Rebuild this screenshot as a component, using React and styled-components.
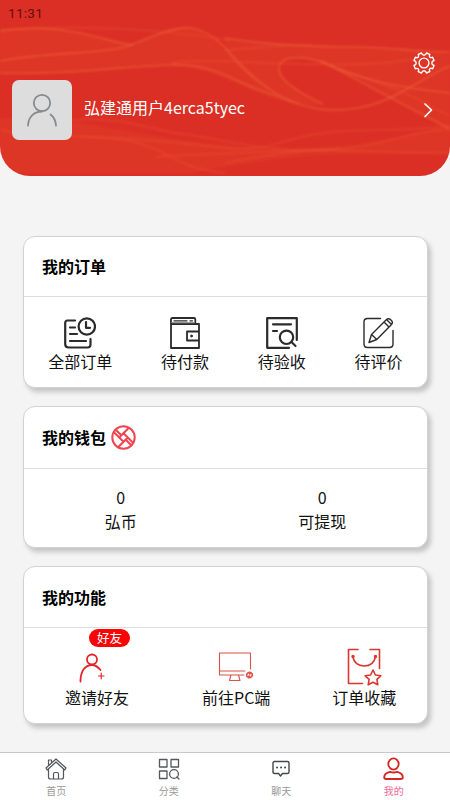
import React from 'react';
import styled, { createGlobalStyle } from 'styled-components';

const GlobalStyle = createGlobalStyle`
    * {
        box-sizing: border-box;
    }
    body {
        margin: 0;
        background: #f4f4f4;
        font-family: "Noto Sans CJK SC", "Noto Sans", sans-serif;
        color: #111;
    }
`;

const Page = styled.div`
    display: flex;
    flex-direction: column;
    height: 800px;
    overflow: hidden;
`;

const Header = styled.header`
    position: relative;
    flex: none;
    height: 176px;
    display: flex;
    flex-direction: column;
    background: #db2f25;
    border-radius: 0 0 30px 30px;
    overflow: hidden;
`;

const WaveSvg = styled.svg`
    position: absolute;
    top: 0;
    left: 0;
    width: 450px;
    height: 176px;
`;

const StatusBar = styled.div`
    position: relative;
    height: 26px;
    padding-left: 8px;
    font-family: Roboto, sans-serif;
    font-size: 13.5px;
    line-height: 26px;
    letter-spacing: 0.3px;
    color: #650e08;
`;

const SettingRow = styled.div`
    position: relative;
    display: flex;
    justify-content: flex-end;
    height: 54px;
    padding: 26px 15px 0 0;
`;

const UserRow = styled.div`
    position: relative;
    display: flex;
    align-items: center;
    height: 60px;
    padding: 0 17px 0 12px;
`;

const Avatar = styled.div`
    display: flex;
    align-items: center;
    justify-content: center;
    width: 60px;
    height: 60px;
    border-radius: 7px;
    background: #ddd;
`;

const UserName = styled.div`
    flex: 1;
    padding: 0 0 7px 12px;
    font-size: 16px;
    line-height: 24px;
    color: #fff;
`;

const Main = styled.main`
    flex: 1;
    display: flex;
    flex-direction: column;
    gap: 18px;
    padding: 60px 22px 0 23px;
`;

const Card = styled.section`
    flex: none;
    height: ${props => props.$height}px;
    border: 1px solid #d2d2d2;
    border-radius: 12px;
    background: #fff;
    box-shadow: 3px 4px 5px rgba(0, 0, 0, 0.2);
`;

const CardTitle = styled.h2`
    display: flex;
    align-items: center;
    gap: 5px;
    height: ${props => props.$height}px;
    margin: 0;
    padding: 0 0 1px 18px;
    border-bottom: 1px solid #dedede;
    font-size: 16px;
    font-weight: 700;
    color: #000;
`;

const OrderList = styled.div`
    display: flex;
    justify-content: space-around;
    padding-top: 20px;
`;

const WalletList = styled(OrderList)`
    padding-top: 16px;
`;

const FunctionList = styled(OrderList)`
    justify-content: flex-start;
    gap: 73px;
    padding: 20px 0 0 41px;

    > :last-child {
        margin-left: -11px;
    }
`;

const Item = styled.div`
    position: relative;
    display: flex;
    flex-direction: column;
    align-items: center;
    font-size: 16px;
    line-height: 24px;
`;

const IconBox = styled.div`
    display: flex;
    align-items: center;
    justify-content: center;
    height: ${props => props.$height || 32}px;
`;

const Badge = styled.span`
    position: absolute;
    top: -19px;
    left: 24px;
    width: 41px;
    height: 18px;
    border-radius: 9px;
    background: #f80505;
    color: #fff;
    font-size: 12.5px;
    line-height: 17px;
    text-align: center;
`;

const TabBar = styled.nav`
    flex: none;
    display: flex;
    height: 48px;
    border-top: 1px solid #c9c9c9;
    background: #fff;
`;

const Tab = styled.div`
    flex: 1;
    display: flex;
    flex-direction: column;
    align-items: center;
    padding: 3px 0 0 0;
    font-size: 10px;
    line-height: 14px;
    color: ${props => (props.$active ? '#f0689a' : '#999')};
`;

const TabIcon = styled.div`
    display: flex;
    align-items: center;
    justify-content: center;
    height: 25px;
    margin-bottom: 3px;
`;

const Svg = styled.svg.attrs({ fill: 'none' })`
    display: block;
    flex: none;
    stroke: ${props => props.$color || '#2b2b2b'};
    stroke-width: ${props => props.$line || 2};
    stroke-linecap: round;
    stroke-linejoin: round;
`;

// the person and the plus sign hang to the left of the label's centre
const InviteSvg = styled(Svg)`
    margin: 2px 10px 0 0;
`;

function Waves() {
    return (
        <WaveSvg viewBox="0 0 450 176" fill="none">
            <defs>
                <filter id="soft" x="-5%" y="-20%" width="110%" height="140%">
                    <feGaussianBlur stdDeviation="1" />
                </filter>
            </defs>
            <g filter="url(#soft)">
                <g fill="#ed5230" fillOpacity="0.18">
                    <path d="M0 31C50 22 75 31 130 45L155 34C190 18 205 34 225 50L280 97C250 95 220 70 180 65C120 68 60 73 0 73Z" />
                    <path d="M225 38C300 50 380 43 450 54V129C400 105 370 80 330 67C300 52 282 54 278 68C279 75 289 88 321 105C280 106 240 72 225 50Z" />
                    <path d="M0 119C70 112 150 142 225 144C320 161 400 134 450 128V154C340 151 280 155 190 173H0Z" />
                </g>
                <g stroke="#f26a3c" strokeOpacity="0.5" strokeWidth="1.7">
                    <path d="M0 31C30 26 60 29 80 33S116 43 133 45" />
                    <path d="M0 61C50 52 100 54 125 47C151 38 170 27 191 28C211 31 225 47 238 62S277 98 300 104" />
                    <path d="M0 73C75 75 125 66 170 65S229 79 262 91S319 115 358 108S424 76 450 66" />
                    <path d="M323 104C292 90 278 77 279 68C281 52 313 56 337 69S400 103 450 129" />
                    <path d="M321 61C357 80 402 88 450 93" />
                    <path d="M225 38C275 46 310 46 355 47S417 52 450 52" />
                </g>
                <g stroke="#f0653b" strokeOpacity="0.32" strokeWidth="1.4">
                    <path d="M0 30C80 25 150 28 230 40" />
                    <path d="M180 65C155 61 194 61 225 61C320 66 375 66 415 59" />
                    <path d="M225 50C250 49 280 44 312 45" />
                    <path d="M340 69L397 89L450 116" />
                    <path d="M0 130C48 139 90 133 130 141S170 167 225 173" />
                    <path d="M72 120C125 116 149 130 183 134S260 152 322 150S400 132 450 129" />
                    <path d="M80 137C145 138 180 143 225 148S283 136 333 132S405 132 450 126" />
                    <path d="M155 157C200 154 225 154 280 151S350 153 450 153" />
                    <path d="M225 163C260 156 300 150 340 148" />
                </g>
            </g>
        </WaveSvg>
    );
}

function GearIcon() {
    return (
        <Svg width="22" height="22" viewBox="0 0 22 22" $color="#fff" $line={1.4}>
            <path d="M8.5 1Q9.2 3.2 11 3.2T13.5 1L16.8 2.3Q15.8 4.3 16.8 5.2T19.7 5.2L21 8.5Q18.8 9.2 18.8 11T21 13.5L19.7 16.8Q17.7 15.8 16.8 16.8T16.8 19.7L13.5 21Q12.8 18.8 11 18.8T8.5 21L5.2 19.7Q6.2 17.7 5.2 16.8T2.3 16.8L1 13.5Q3.2 12.8 3.2 11T1 8.5L2.3 5.2Q4.3 6.2 5.2 5.2T5.2 2.3Z" />
            <circle cx="11" cy="11" r="4.9" />
        </Svg>
    );
}

function AvatarIcon() {
    return (
        <Svg width="32" height="34" viewBox="0 0 32 34" $color="#858b91" $line={1.8}>
            <circle cx="16" cy="10" r="8.2" />
            <path d="M2 32.5C2.5 23 9 18.5 16 18.5M24.5 21.5C28 24 29.7 28 30 32.5" />
        </Svg>
    );
}

function AllOrderIcon() {
    return (
        <Svg width="32" height="32" viewBox="0 0 32 32" $line={2.2}>
            <path d="M11 3.5H3.5Q1.2 3.5 1.2 6V27Q1.2 30.5 4.7 30.5H23.5Q26.5 30.5 26.5 27.5V22M6 10.5H11M6 17H13M6 24H22" />
            <circle cx="22.8" cy="9.5" r="8.2" />
            <path d="M22 5V10.8H26" />
        </Svg>
    );
}

function PayIcon() {
    return (
        <Svg width="32" height="32" viewBox="0 0 32 32" $line={1.8}>
            <path d="M2 2.5Q2 1 3.5 1H25Q26.3 1 26.3 2.5V6.5M2 2.5V31H30V7H3M30 14.5H18V23.5H30" />
            <path d="M5 3.8H18M21 3.8H23.5" strokeWidth="1.3" />
            <path d="M3 5.6H25" stroke="#999" strokeWidth="1.2" />
            <circle cx="22.5" cy="19" r="0.9" fill="#2b2b2b" strokeWidth="1" />
        </Svg>
    );
}

function AcceptIcon() {
    return (
        <Svg width="32" height="32" viewBox="0 0 32 32" $line={2.2}>
            <path d="M23 30.8H1.2V1.2H30.8V23M7 7.3H25M7 14H11" />
            <circle cx="20.5" cy="20.3" r="6.7" />
            <path d="M25.5 25L29.5 29" />
        </Svg>
    );
}

function ReviewIcon() {
    return (
        <Svg width="31" height="32" viewBox="0 0 31 32" $line={1.4}>
            <path d="M17.5 1.5H4.5Q1 1.5 1 5V27Q1 30.5 4.5 30.5H26.5Q30 30.5 30 27V13.5" />
            <path d="M6 25.5L8.5 17.5L23.5 2.5Q25.5 .8 28 3Q30.5 5.5 28.5 7.5L13.8 22.5ZM21 5L26 10M8.5 17.5L13.8 22.5M23.5 2.5L28.5 7.5" />
        </Svg>
    );
}

function CoinIcon() {
    return (
        <Svg width="25" height="25" viewBox="0 0 25 25" $color="#f04450" $line={2}>
            <circle cx="12.5" cy="12.5" r="11.2" />
            <path d="M8.2 12.5L17.2 3.5M12.5 8.2L21.5 17.2M16.8 12.5L7.8 21.5M12.5 16.8L3.5 7.8" />
            <path d="M5 5L9.5 9.5M20 20L15.5 15.5" />
        </Svg>
    );
}

function InviteIcon() {
    return (
        <InviteSvg width="26" height="30" viewBox="0 0 26 30" $color="#e1252b" $line={1.8}>
            <circle cx="13" cy="6.5" r="5" />
            <path d="M1.5 28.5C1.5 18 6 12 13 12C17 12 19 14 21.5 17" />
            <path d="M19.5 23H25M22.2 20.2V25.8" strokeWidth="1.2" />
        </InviteSvg>
    );
}

function PcIcon() {
    return (
        <Svg width="36" height="30" viewBox="0 0 36 30" $color="#dc5148" $line={1.1}>
            <path d="M32.5 17V1H1.5V23H26M1.5 19H27M13 23L11.5 28.5H22L20.5 23" />
            <path d="M28.8 24.2A2.9 2.9 0 0 1 33 20.8M34.2 21.8A2.9 2.9 0 0 1 30 25.2M33 20.8L31.8 22M30 25.2L31.2 24" strokeWidth="1.7" />
        </Svg>
    );
}

function FavoriteIcon() {
    return (
        <Svg width="35" height="38" viewBox="0 0 35 38" $color="#d93731" $line={1.6}>
            <path d="M11 1.5H1.5V35.5H15.5M23 1.5H32.5V20.5" />
            <path d="M6 9C7 15 12 18 17.5 18S27 15 28.5 9" />
            <circle cx="6" cy="8.5" r=".9" fill="#d93731" />
            <circle cx="28.5" cy="8.5" r=".9" fill="#d93731" />
            <path d="M26 22L28.4 27L33.8 27.8L29.9 31.4L30.8 36.8L26 34.2L21.2 36.8L22.1 31.4L18.2 27.8L23.6 27Z" />
        </Svg>
    );
}

function HomeIcon() {
    return (
        <Svg width="22" height="22" viewBox="0 0 22 22" $color="#50565b" $line={1.2}>
            <path d="M1 10L11 1L21 10L19.8 12L11 4L2.2 12ZM3.5 7V2H6.5V4.5M3.5 11V19Q3.5 21 5.5 21H16.5Q18.5 21 18.5 19V11M8.5 21V16Q8.5 14.5 10 14.5H12Q13.5 14.5 13.5 16V21" />
        </Svg>
    );
}

function CategoryIcon() {
    return (
        <Svg width="22" height="22" viewBox="0 0 22 22" $color="#54585c" $line={1.3}>
            <path d="M1.5 1.5H9V9H1.5ZM13 1.5H20.5V9H13ZM1.5 13H9V20.5H1.5ZM19 19L21 21" />
            <circle cx="16" cy="16" r="4.4" />
        </Svg>
    );
}

function ChatIcon() {
    return (
        <Svg width="18" height="18" viewBox="0 0 18 18" $color="#44484b" $line={1.4}>
            <path d="M2.5 1.5H15.5Q17 1.5 17 3V12Q17 13.5 15.5 13.5H10.5L8.5 16L6.5 13.5H2.5Q1 13.5 1 12V3Q1 1.5 2.5 1.5Z" />
            <path d="M5 7.5H5.1M9 7.5H9.1M13 7.5H13.1" strokeWidth="1.9" />
        </Svg>
    );
}

function MineIcon() {
    return (
        <Svg width="21" height="24" viewBox="0 0 21 24" $color="#d5251f" $line={1.8}>
            <ellipse cx="10.5" cy="7" rx="5.2" ry="5.6" />
            <path d="M7 14.8Q1.2 16 1.2 20.3Q1.2 22 3.2 22H17.8Q19.8 22 19.8 20.3Q19.8 16 14 14.8Q10.5 16.2 7 14.8Z" />
        </Svg>
    );
}

const orders = [
    { label: '全部订单', icon: <AllOrderIcon /> },
    { label: '待付款', icon: <PayIcon /> },
    { label: '待验收', icon: <AcceptIcon /> },
    { label: '待评价', icon: <ReviewIcon /> },
];

const functions = [
    { label: '邀请好友', icon: <InviteIcon />, badge: '好友' },
    { label: '前往PC端', icon: <PcIcon /> },
    { label: '订单收藏', icon: <FavoriteIcon /> },
];

const tabs = [
    { label: '首页', icon: <HomeIcon /> },
    { label: '分类', icon: <CategoryIcon /> },
    { label: '聊天', icon: <ChatIcon /> },
    { label: '我的', icon: <MineIcon />, active: true },
];

function App() {
    return (
        <Page>
            <GlobalStyle />
            <Header>
                <Waves />
                <StatusBar>11:31</StatusBar>
                <SettingRow>
                    <GearIcon />
                </SettingRow>
                <UserRow>
                    <Avatar>
                        <AvatarIcon />
                    </Avatar>
                    <UserName>弘建通用户4erca5tyec</UserName>
                    <Svg width="10" height="16" viewBox="0 0 10 16" $color="#fff" $line={1.7}>
                        <path d="M2 2L8.5 8L2 14.5" />
                    </Svg>
                </UserRow>
            </Header>
            <Main>
                <Card $height={152}>
                    <CardTitle $height={60}>我的订单</CardTitle>
                    <OrderList>
                        {orders.map(item => (
                            <Item key={item.label}>
                                <IconBox>{item.icon}</IconBox>
                                {item.label}
                            </Item>
                        ))}
                    </OrderList>
                </Card>
                <Card $height={142}>
                    <CardTitle $height={62}>
                        我的钱包
                        <CoinIcon />
                    </CardTitle>
                    <WalletList>
                        <Item>
                            <span>0</span>
                            <span>弘币</span>
                        </Item>
                        <Item>
                            <span>0</span>
                            <span>可提现</span>
                        </Item>
                    </WalletList>
                </Card>
                {/* 功能 */}
                <Card $height={158}>
                    <CardTitle $height={61}>我的功能</CardTitle>
                    <FunctionList>
                        {functions.map(item => (
                            <Item key={item.label}>
                                {item.badge && <Badge>{item.badge}</Badge>}
                                <IconBox $height={37}>{item.icon}</IconBox>
                                {item.label}
                            </Item>
                        ))}
                    </FunctionList>
                </Card>
            </Main>
            <TabBar>
                {tabs.map(tab => (
                    <Tab key={tab.label} $active={tab.active}>
                        <TabIcon>{tab.icon}</TabIcon>
                        {tab.label}
                    </Tab>
                ))}
            </TabBar>
        </Page>
    );
}

export default App;
